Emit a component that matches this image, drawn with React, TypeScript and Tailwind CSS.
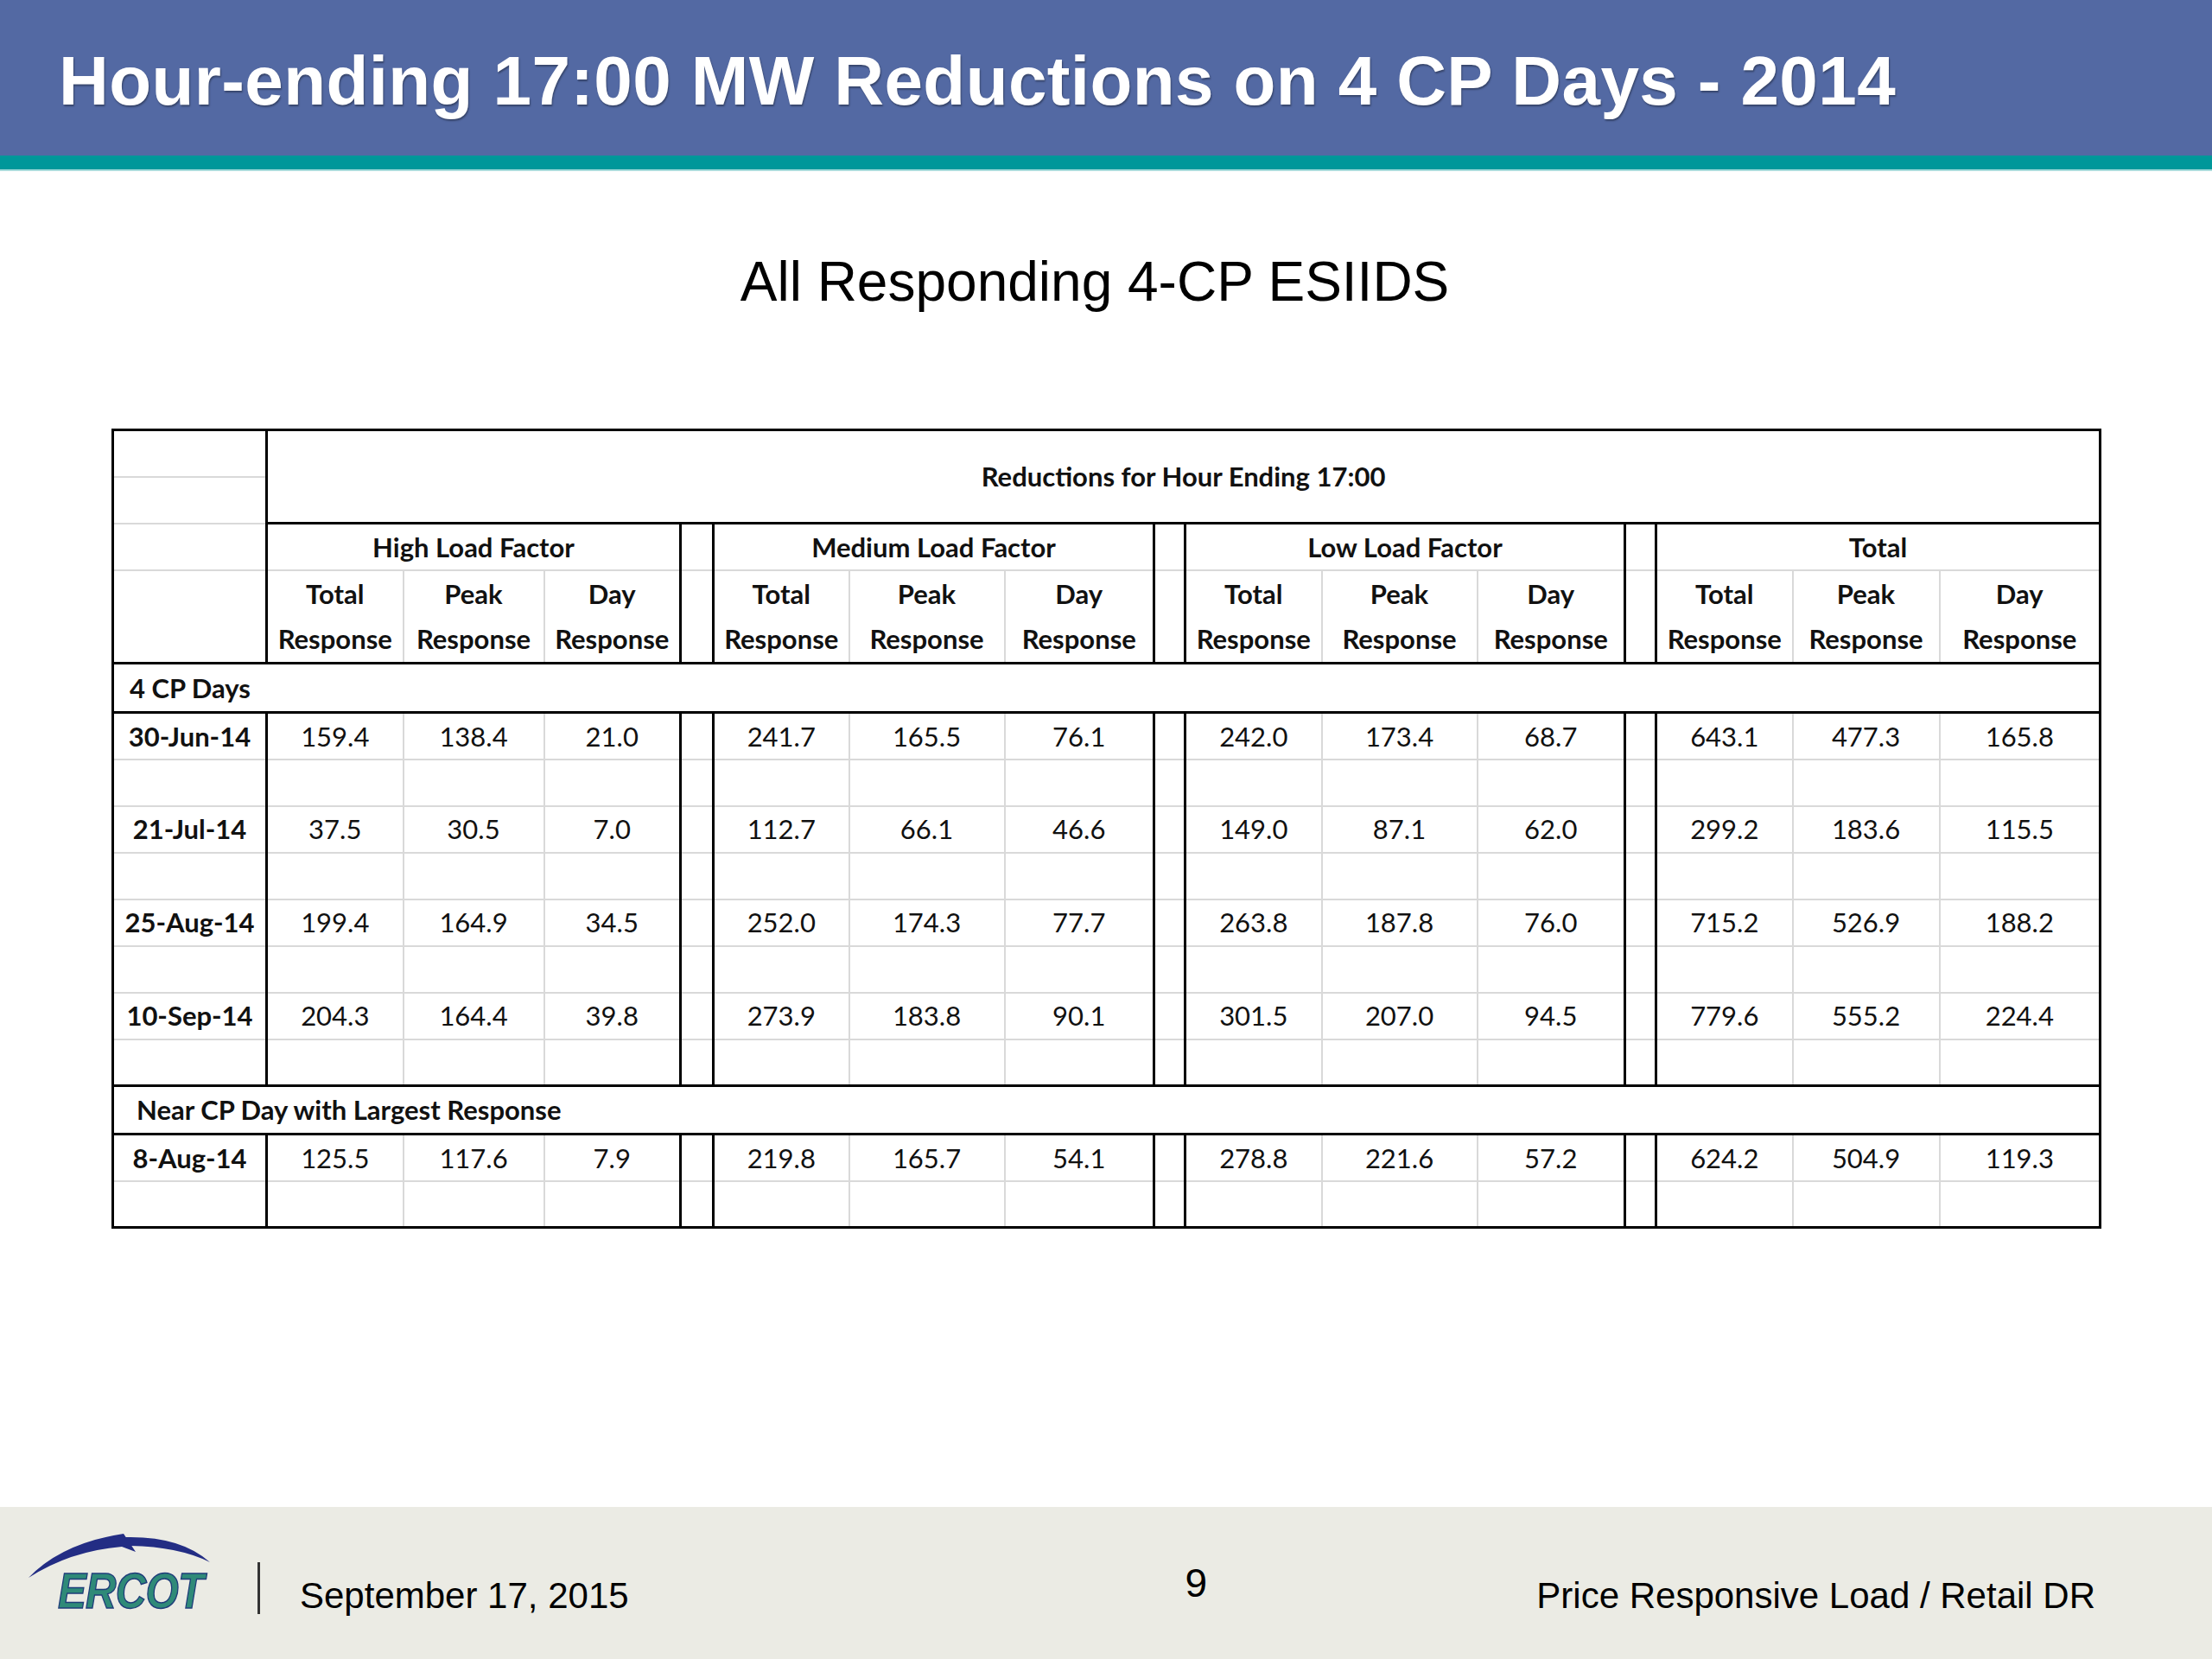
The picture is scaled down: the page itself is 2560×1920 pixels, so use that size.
import React from "react";

const colWidths = [
  "w-[178px]",
  "w-[158px]",
  "w-[163px]",
  "w-[158px]",
  "w-[38px]",
  "w-[157px]",
  "w-[180px]",
  "w-[173px]",
  "w-[36px]",
  "w-[158px]",
  "w-[180px]",
  "w-[171px]",
  "w-[36px]",
  "w-[158px]",
  "w-[170px]",
  "w-[186px]",
];

// columns that get a heavy black line on their right side
const thickCols = [0, 3, 4, 7, 8, 11, 12, 15];

const GRAY_B = "border-b-2 border-b-[#d9d9d9]";
const BLACK_B = "border-b-[3px] border-b-black";

const rightBorder = (c: number) =>
  thickCols.includes(c) ? "border-r-[3px] border-r-black" : "border-r-2 border-r-[#d9d9d9]";

const cpDays = [
  ["30-Jun-14", "159.4", "138.4", "21.0", "241.7", "165.5", "76.1", "242.0", "173.4", "68.7", "643.1", "477.3", "165.8"],
  ["21-Jul-14", "37.5", "30.5", "7.0", "112.7", "66.1", "46.6", "149.0", "87.1", "62.0", "299.2", "183.6", "115.5"],
  ["25-Aug-14", "199.4", "164.9", "34.5", "252.0", "174.3", "77.7", "263.8", "187.8", "76.0", "715.2", "526.9", "188.2"],
  ["10-Sep-14", "204.3", "164.4", "39.8", "273.9", "183.8", "90.1", "301.5", "207.0", "94.5", "779.6", "555.2", "224.4"],
];

const nearCp = ["8-Aug-14", "125.5", "117.6", "7.9", "219.8", "165.7", "54.1", "278.8", "221.6", "57.2", "624.2", "504.9", "119.3"];

const groups = ["High Load Factor", "Medium Load Factor", "Low Load Factor", "Total"];
const subHeads = [
  ["Total", "Response"],
  ["Peak", "Response"],
  ["Day", "Response"],
];

// date + 12 values -> 16 table columns (separators left empty)
function expand(d: string[]) {
  return [d[0], d[1], d[2], d[3], "", d[4], d[5], d[6], "", d[7], d[8], d[9], "", d[10], d[11], d[12]];
}

function DataRow({ values, bottom }: { values: string[]; bottom: string }) {
  return (
    <tr className="h-[54px]">
      {values.map((v, c) => (
        <td
          key={c}
          className={`${rightBorder(c)} ${bottom} p-0 text-center align-middle whitespace-nowrap ${c === 0 ? "font-bold" : ""}`}
        >
          {v}
        </td>
      ))}
    </tr>
  );
}

function ErcotLogo() {
  return (
    <div className="flex w-[214px] flex-col">
      <svg width="214" height="55" viewBox="0 0 214 55">
        <path d="M2,51 Q40,11 112,0 L126,21 L110,15 Q50,20 2,51 Z" fill="#232d84" />
        <path d="M112,4 Q178,2 212,33 Q176,15 120,14 Z" fill="#232d84" />
      </svg>
      <span className="-mt-[18px] ml-[36px] block origin-left scale-x-[0.85] text-[58px] leading-none font-bold italic tracking-[-1px] text-[#2f8a78] [-webkit-text-stroke:1.5px_#1f3d7a] [font-family:'Liberation_Sans',Arial,sans-serif]">
        ERCOT
      </span>
    </div>
  );
}

export default function App() {
  return (
    <div className="flex h-[1920px] w-[2560px] flex-col bg-white [font-family:'Liberation_Sans',Arial,sans-serif]">
      {/* Title bar */}
      <div className="h-[180px] bg-[#5369a3] pt-[54px] pl-[68px]">
        <h1 className="text-[80px] leading-[80px] font-bold tracking-[0.4px] text-white [text-shadow:1px_2px_2px_rgba(0,0,0,0.35)]">
          Hour-ending 17:00 MW Reductions on 4 CP Days - 2014
        </h1>
      </div>
      <div className="h-[18px] border-b-2 border-b-[#a9dcdc] bg-[#00979a]" />

      <main className="flex-1">
        <h2 className="mt-[96px] pr-[26px] text-center text-[64px] leading-none text-black">
          All Responding 4-CP ESIIDS
        </h2>

        <table className="mt-[138px] ml-[129px] w-[2301px] table-fixed border-collapse border-[3px] border-black text-[31px] text-[#111] [font-family:Lato,'Open_Sans',sans-serif]">
          <colgroup>
            {colWidths.map((w, i) => (
              <col key={i} className={w} />
            ))}
          </colgroup>
          <tbody>
            <tr className="h-[54px]">
              <td className={`${rightBorder(0)} ${GRAY_B} p-0`} />
              <td colSpan={15} rowSpan={2} className={`${BLACK_B} p-0 text-center align-middle font-bold`}>
                Reductions for Hour Ending 17:00
              </td>
            </tr>
            <tr className="h-[54px]">
              <td className={`${rightBorder(0)} ${GRAY_B} p-0`} />
            </tr>
            <tr className="h-[54px]">
              <td className={`${rightBorder(0)} ${GRAY_B} p-0`} />
              {groups.map((g, i) => (
                <React.Fragment key={g}>
                  <td colSpan={3} className={`${rightBorder(3 + i * 4)} ${GRAY_B} p-0 text-center align-middle font-bold`}>
                    {g}
                  </td>
                  {i < 3 && <td className={`${rightBorder(4 + i * 4)} ${GRAY_B} p-0`} />}
                </React.Fragment>
              ))}
            </tr>
            <tr className="h-[54px]">
              <td rowSpan={2} className={`${rightBorder(0)} ${BLACK_B} p-0`} />
              {groups.map((g, i) => (
                <React.Fragment key={g}>
                  {subHeads.map((s, j) => (
                    <td
                      key={j}
                      rowSpan={2}
                      className={`${rightBorder(1 + i * 4 + j)} ${BLACK_B} p-0 text-center align-middle leading-[52px] font-bold whitespace-nowrap`}
                    >
                      {s[0]}
                      <br />
                      {s[1]}
                    </td>
                  ))}
                  {i < 3 && <td rowSpan={2} className={`${rightBorder(4 + i * 4)} ${BLACK_B} p-0`} />}
                </React.Fragment>
              ))}
            </tr>
            <tr className="h-[54px]" />

            <tr className="h-[57px]">
              <td colSpan={16} className={`${BLACK_B} p-0 pl-[18px] text-left align-middle font-bold`}>
                4 CP Days
              </td>
            </tr>
            {cpDays.map((d, i) => (
              <React.Fragment key={d[0]}>
                <DataRow values={expand(d)} bottom={GRAY_B} />
                <DataRow values={Array(16).fill("")} bottom={i === cpDays.length - 1 ? BLACK_B : GRAY_B} />
              </React.Fragment>
            ))}

            <tr className="h-[56px]">
              <td colSpan={16} className={`${BLACK_B} p-0 pl-[26px] text-left align-middle font-bold`}>
                Near CP Day with Largest Response
              </td>
            </tr>
            <DataRow values={expand(nearCp)} bottom={GRAY_B} />
            <DataRow values={Array(16).fill("")} bottom={BLACK_B} />
          </tbody>
        </table>
      </main>

      {/* Footer */}
      <footer className="flex h-[176px] items-start bg-[#ebebe4]">
        <div className="mt-[31px] ml-[31px]">
          <ErcotLogo />
        </div>
        <div className="mt-[64px] ml-[53px] h-[60px] w-[3px] bg-[#333]" />
        <div className="mt-[82px] ml-[46px] text-[42px] leading-[42px] text-black">September 17, 2015</div>
        <div className="mt-[65px] ml-[644px] text-[46px] leading-[46px] text-black">9</div>
        <div className="mt-[82px] mr-[135px] ml-auto text-[42px] leading-[42px] text-black">
          Price Responsive Load / Retail DR
        </div>
      </footer>
    </div>
  );
}
